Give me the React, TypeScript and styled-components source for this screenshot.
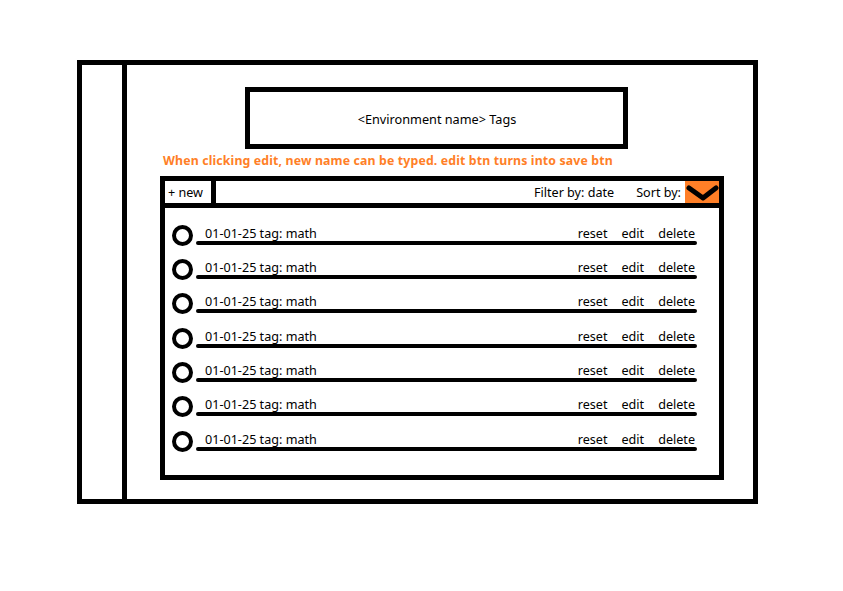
import React from "react";
import styled, { createGlobalStyle } from "styled-components";

const GlobalStyle = createGlobalStyle`
  html, body {
    margin: 0;
    padding: 0;
    background: #ffffff;
  }
  body {
    font-family: "Noto Sans", "Open Sans", Arial, sans-serif;
    color: #000;
  }
`;

const Page = styled.div`
  width: 843px;
  height: 591px;
  padding: 60px 0 0 77px;
  box-sizing: border-box;
`;

const Frame = styled.div`
  display: flex;
  width: 681px;
  height: 444px;
  border: 5px solid #000;
  box-sizing: border-box;
`;

const Sidebar = styled.div`
  width: 40px;
  border-right: 5px solid #000;
`;

const Content = styled.main`
  flex: 1;
  display: flex;
  flex-direction: column;
  padding: 22px 0 0 33px;
`;

const TitleBox = styled.div`
  width: 383px;
  height: 62px;
  margin-left: 85px;
  border: 5px solid #000;
  box-sizing: border-box;
  display: flex;
  align-items: center;
  justify-content: center;
  font-size: 12.7px;
  padding: 2px 0 0 1px;
`;

const Note = styled.p`
  margin: 4px 0 0 3px;
  height: 16px;
  line-height: 16px;
  font-size: 12.3px;
  font-weight: 700;
  letter-spacing: 0.15px;
  color: #ff7f27;
  white-space: nowrap;
`;

const Panel = styled.section`
  margin-top: 7px;
  width: 564px;
  height: 304px;
  border: 5px solid #000;
  box-sizing: border-box;
  display: flex;
  flex-direction: column;
`;

const Header = styled.div`
  display: flex;
  align-items: center;
  height: 22px;
  border-bottom: 5px solid #000;
  box-sizing: content-box;
  font-size: 12.6px;
`;

const NewButton = styled.button`
  all: unset;
  width: 51px;
  height: 100%;
  padding-left: 3px;
  box-sizing: border-box;
  border-right: 5px solid #000;
  display: flex;
  align-items: center;
  font-size: 12.6px;
  cursor: pointer;
`;

const HeaderLabel = styled.span<{ $gap?: number }>`
  margin-left: ${(p) => p.$gap ?? 0}px;
  white-space: nowrap;
`;

const Spacer = styled.div`
  flex: 1;
`;

const SortButton = styled.button`
  all: unset;
  width: 34px;
  height: 22px;
  margin-left: 4px;
  background: #ff7f27;
  display: flex;
  align-items: center;
  justify-content: center;
  cursor: pointer;
`;

const List = styled.ul`
  list-style: none;
  margin: 0;
  padding: 10px 22px 0 7px;
`;

const Row = styled.li`
  display: flex;
  align-items: center;
  height: 34.33px;
`;

const Circle = styled.span`
  width: 21px;
  height: 21px;
  border: 4px solid #000;
  border-radius: 50%;
  box-sizing: border-box;
  flex-shrink: 0;
`;

const RowBody = styled.div`
  flex: 1;
  height: 19px;
  margin-left: 3px;
  display: flex;
  flex-direction: column;
`;

const RowText = styled.div`
  display: flex;
  height: 15px;
  line-height: 15px;
  font-size: 12.6px;
  padding: 0 2px 0 9px;
`;

const Actions = styled.div`
  margin-left: auto;
  display: flex;
  gap: 14px;
`;

const Bar = styled.div`
  height: 4px;
  background: #000;
  border-radius: 2px;
`;

const rows = Array.from({ length: 7 }, () => ({ date: "01-01-25", tag: "math" }));

export default function App() {
  return (
    <Page>
      <GlobalStyle />
      <Frame>
        <Sidebar />
        <Content>
          <TitleBox>&lt;Environment name&gt; Tags</TitleBox>
          <Note>When clicking edit, new name can be typed. edit btn turns into save btn</Note>
          <Panel>
            <Header>
              <NewButton>+ new</NewButton>
              <Spacer />
              <HeaderLabel>Filter by: date</HeaderLabel>
              <HeaderLabel $gap={22}>Sort by:</HeaderLabel>
              <SortButton aria-label="sort">
                <svg width="34" height="22" viewBox="0 0 34 22">
                  <polyline
                    points="4,7 18,17 31,7"
                    fill="none"
                    stroke="#000"
                    strokeWidth="5"
                    strokeLinecap="round"
                    strokeLinejoin="round"
                  />
                </svg>
              </SortButton>
            </Header>
            <List>
              {rows.map((r, i) => (
                <Row key={i}>
                  <Circle />
                  <RowBody>
                    <RowText>
                      <span>
                        {r.date} tag: {r.tag}
                      </span>
                      <Actions>
                        <span>reset</span>
                        <span>edit</span>
                        <span>delete</span>
                      </Actions>
                    </RowText>
                    <Bar />
                  </RowBody>
                </Row>
              ))}
            </List>
          </Panel>
        </Content>
      </Frame>
    </Page>
  );
}
